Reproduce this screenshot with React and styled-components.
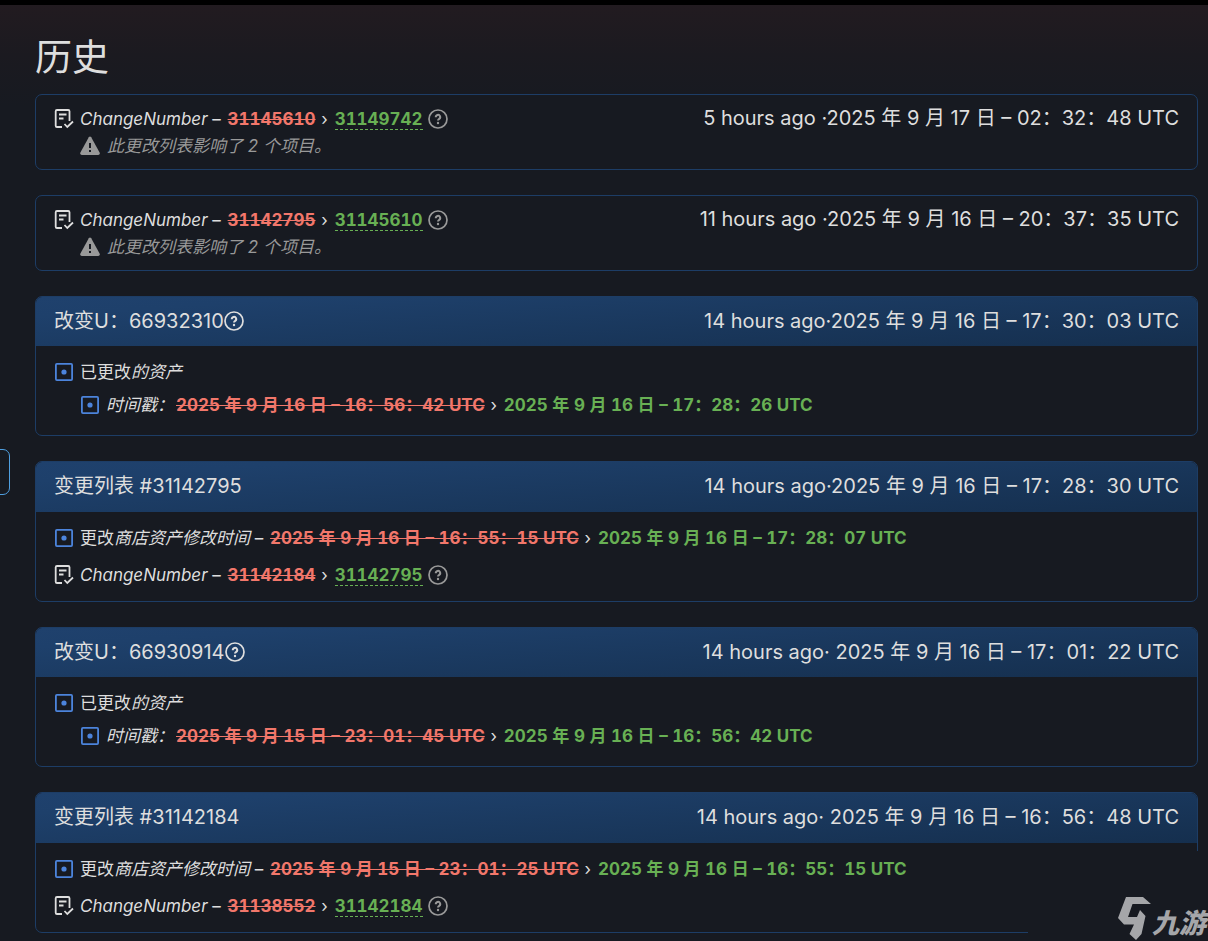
import React from "react";
import styled, { createGlobalStyle } from "styled-components";

const GlobalStyle = createGlobalStyle`
  * { box-sizing: border-box; }
  body {
    margin: 0;
    background: #171a21;
    color: #dedede;
    font-family: Inter, "Noto Sans CJK SC", sans-serif;
    font-size: 17px;
    line-height: 26px;
  }
  ul { list-style: none; margin: 0; padding: 0; }
  h1, h2, p { margin: 0; font-weight: 400; }
`;

const Page = styled.div`
  position: relative;
  overflow: hidden;
  border-top: 5px solid #000;
  background: linear-gradient(to bottom, #221b20 0, #1b1a20 50px, #171a21 100px);
  padding: 27px 10px 8px 35px;
`;

const Title = styled.h1`
  font-size: 37px;
  line-height: 52px;
  margin-bottom: 10px;
`;

const History = styled.main`
  display: flex;
  flex-direction: column;
  gap: 25px;
`;

const Card = styled.section`
  border: 1px solid #1d3d66;
  border-radius: 7px;
  background: #171a21;
  overflow: hidden;
`;

const CardHeader = styled.header`
  display: flex;
  justify-content: space-between;
  align-items: center;
  height: ${(p) => (p.$tall ? 50 : 49)}px;
  padding: 0 18px 2px;
  background: linear-gradient(176deg, #1f416d 0%, #1e406b 15%, #152f4e 100%);
`;

const CardTitle = styled.h2`
  display: flex;
  align-items: center;
  font-size: 20px;
`;

const Stamp = styled.span`
  font-size: 20px;
  white-space: pre;
`;

const Glyph = styled.svg`
  flex: none;
  width: 20px;
  height: 20px;
  margin-right: ${(p) => p.$gap || 0}px;
`;

const Entries = styled.ul`
  display: flex;
  flex-direction: column;
  gap: 9px;
  padding: 12px 18px;
`;

const SubEntries = styled.ul`
  padding: 5px 0 4px 26px;
`;

const Line = styled.div`
  display: flex;
  align-items: center;
  height: 28px;
  white-space: pre;
`;

const Compact = styled.div`
  display: flex;
  justify-content: space-between;
  align-items: flex-start;
  padding: 10px 18px;
`;

const Note = styled.p`
  display: flex;
  align-items: center;
  height: 26px;
  padding-left: 26px;
  color: #999;
  font-style: italic;
`;

const Old = styled.del`
  margin: 0 1px 0 2px;
  color: #f2776b;
  font-weight: 700;
  font-variant-numeric: tabular-nums;
  text-decoration: line-through 1px;
`;

const New = styled.ins`
  margin-left: 2px;
  color: #68b054;
  font-weight: 700;
  font-variant-numeric: tabular-nums;
  text-decoration: none;
`;

const ChangeLink = styled.a`
  color: inherit;
  text-decoration: none;
  display: block;
  line-height: 20px;
  border-bottom: 1px dashed currentColor;
`;

const HelpButton = styled.button`
  display: flex;
  padding: 0;
  border: 0;
  background: none;
  color: ${(p) => (p.$muted ? "#999" : "#dedede")};
  margin-left: ${(p) => (p.$muted ? 5 : 0)}px;
`;

const SideTab = styled.button`
  position: absolute;
  left: -20px;
  top: 444px;
  width: 30px;
  height: 46px;
  border: 1px solid #4f9fe0;
  border-radius: 7px;
  background: #171a21;
`;

const Watermark = styled.aside`
  position: absolute;
  right: 0;
  bottom: 0;
  width: 180px;
  height: 90px;
  padding-right: 2px;
  background: #171a21;
  color: #a5a6a9;
  display: flex;
  align-items: flex-end;
  justify-content: flex-end;
  font-family: "Noto Sans CJK SC", sans-serif;
  font-size: 27px;
  font-weight: 900;
  font-style: italic;
  line-height: 38px;
`;

const Help = ({ muted }) => (
  <HelpButton type="button" aria-label="Help" $muted={muted}>
    <Glyph viewBox="0 0 20 20" fill="none" stroke="currentColor" strokeWidth="1.7">
      <circle cx="10" cy="10" r="9" />
      <path d="M7.8 8.200a2.200 2.200 0 1 1 3.400 1.700c-.8.5-1.200.8-1.200 1.600" strokeWidth="2" />
      <circle cx="10" cy="14" r="1.200" fill="currentColor" stroke="none" />
    </Glyph>
  </HelpButton>
);

const ListIcon = () => (
  <Glyph $gap={6} viewBox="0 0 20 20" fill="none" stroke="#dedede" strokeWidth="1.8">
    <path d="M8 18H3Q1.700 18 1.700 16.700V2.300Q1.700 1 3 1H14.200Q15.500 1 15.500 2.300V12" />
    <path d="M5 5.500H12.500M5 9.500H9.500" />
    <path d="M10.500 15L13.300 18L19 12.500" />
  </Glyph>
);

const DotIcon = () => (
  <Glyph $gap={6} viewBox="0 0 20 20" fill="none" stroke="#4c84dc" strokeWidth="1.8">
    <rect x="1.900" y="1.900" width="16.200" height="16.200" rx="1" />
    <circle cx="10" cy="10" r="2.600" fill="#4c84dc" stroke="none" />
  </Glyph>
);

const WarnIcon = () => (
  <Glyph $gap={7} viewBox="0 0 20 20">
    <path
      d="M8.800 1.300Q10 -.3 11.200 1.300L19.600 16.600Q20.300 18.900 18.200 19H1.800Q-.3 18.900 .4 16.600Z"
      fill="#999"
    />
    <path d="M10 7V12M10 14V16" stroke="#171a21" strokeWidth="2" />
  </Glyph>
);

const NumberChange = ({ from, to }) => (
  <Line>
    <ListIcon />
    <i>ChangeNumber</i>
    {" – "}
    <Old>{from}</Old>
    {" › "}
    <New>
      <ChangeLink href={"#" + to}>{to}</ChangeLink>
    </New>
    <Help muted />
  </Line>
);

const TimeChange = ({ label, from, to }) => (
  <Line>
    <DotIcon />
    {label}
    <Old>{from}</Old>
    {" › "}
    <New>{to}</New>
  </Line>
);

const CompactCard = ({ from, to, stamp }) => (
  <Card>
    <Compact>
      <div>
        <NumberChange from={from} to={to} />
        <Note>
          <WarnIcon />
          此更改列表影响了 2 个项目。
        </Note>
      </div>
      <Stamp>{stamp}</Stamp>
    </Compact>
  </Card>
);

const AssetCard = ({ id, stamp, from, to }) => (
  <Card>
    <CardHeader>
      <CardTitle>
        改变U：{id}
        <Help />
      </CardTitle>
      <Stamp>{stamp}</Stamp>
    </CardHeader>
    <Entries>
      <li>
        <Line>
          <DotIcon />
          已更改<i>的资产</i>
        </Line>
        <SubEntries>
          <li>
            <TimeChange label={<i>时间戳：</i>} from={from} to={to} />
          </li>
        </SubEntries>
      </li>
    </Entries>
  </Card>
);

const ListCard = ({ id, stamp, from, to, previous }) => (
  <Card>
    <CardHeader $tall>
      <CardTitle>变更列表 #{id}</CardTitle>
      <Stamp>{stamp}</Stamp>
    </CardHeader>
    <Entries>
      <li>
        <TimeChange
          label={<span>更改<i>商店资产修改时间</i>{" – "}</span>}
          from={from}
          to={to}
        />
      </li>
      <li>
        <NumberChange from={previous} to={id} />
      </li>
    </Entries>
  </Card>
);

export default function App() {
  return (
    <Page>
      <GlobalStyle />
      <Title>历史</Title>
      <History>
        <CompactCard from="31145610" to="31149742" stamp="5 hours ago ·2025 年 9 月 17 日 – 02：32：48 UTC" />
        <CompactCard from="31142795" to="31145610" stamp="11 hours ago ·2025 年 9 月 16 日 – 20：37：35 UTC" />
        <AssetCard
          id="66932310"
          stamp="14 hours ago·2025 年 9 月 16 日 – 17：30：03 UTC"
          from="2025 年 9 月 16 日 – 16：56：42 UTC"
          to="2025 年 9 月 16 日 – 17：28：26 UTC"
        />
        <ListCard
          id="31142795"
          previous="31142184"
          stamp="14 hours ago·2025 年 9 月 16 日 – 17：28：30 UTC"
          from="2025 年 9 月 16 日 – 16：55：15 UTC"
          to="2025 年 9 月 16 日 – 17：28：07 UTC"
        />
        <AssetCard
          id="66930914"
          stamp="14 hours ago· 2025 年 9 月 16 日 – 17：01：22 UTC"
          from="2025 年 9 月 15 日 – 23：01：45 UTC"
          to="2025 年 9 月 16 日 – 16：56：42 UTC"
        />
        <ListCard
          id="31142184"
          previous="31138552"
          stamp="14 hours ago· 2025 年 9 月 16 日 – 16：56：48 UTC"
          from="2025 年 9 月 15 日 – 23：01：25 UTC"
          to="2025 年 9 月 16 日 – 16：55：15 UTC"
        />
      </History>
      <SideTab type="button" aria-label="Open panel" />
      <Watermark>
        <svg width="34" height="45" viewBox="0 0 34 45" fill="#a5a6a9" aria-hidden="true">
          <path d="M8 1H25L33 8H14.500L10 21H19L22 14L27.500 20L23.500 38L18 44L11.500 38L16 28.500H6L0 22Z" />
        </svg>
        九游
      </Watermark>
    </Page>
  );
}
